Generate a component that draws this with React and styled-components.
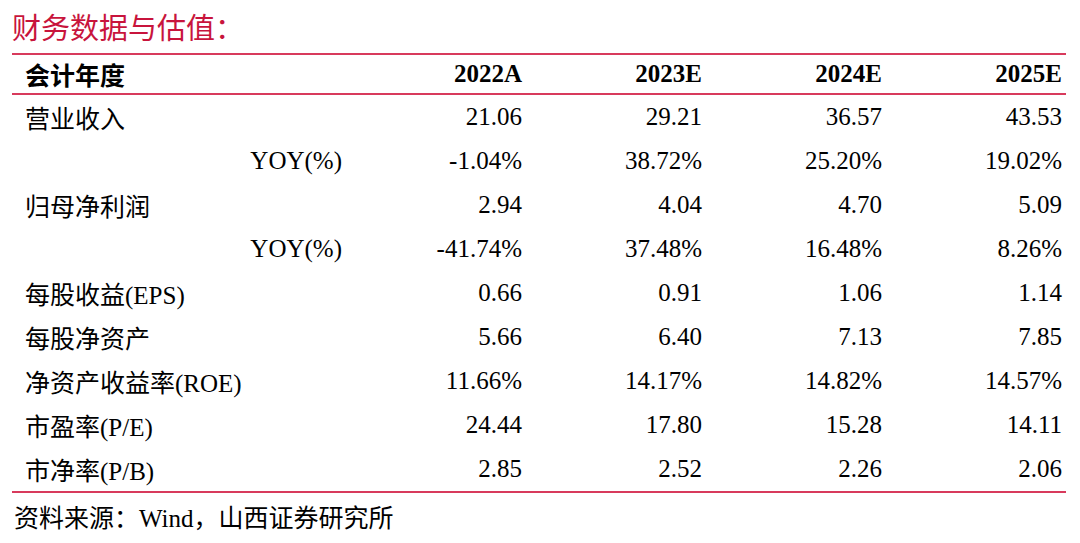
import React from "react";
import styled, { createGlobalStyle } from "styled-components";

const Global = createGlobalStyle`
  html, body { margin: 0; padding: 0; background: #fff; }
  body { font-family: "Liberation Serif", "Noto Sans CJK SC", serif; color: #000; }
`;

const Page = styled.div`
  width: 1080px;
  height: 543px;
  padding: 0 14px 0 12px;
  box-sizing: border-box;
  overflow: hidden;
`;

const Title = styled.div`
  padding-top: 8px;
  height: 44px;
  box-sizing: border-box;
  line-height: 36px;
  font-size: 29px;
  color: #c8143c;
  font-family: "Noto Sans CJK SC", sans-serif;
  white-space: nowrap;
`;

const Table = styled.div`
  margin-top: 9px;
  border-top: 2px solid #d83a5c;
  border-bottom: 2px solid #d83a5c;
`;

const Row = styled.div`
  display: grid;
  grid-template-columns: 1fr repeat(4, 180px);
  padding-right: 4px;
  height: ${(p) => (p.$head ? "38px" : "44px")};
  align-items: center;
  font-size: 25px;
  font-weight: ${(p) => (p.$head ? 700 : 400)};
  border-bottom: ${(p) => (p.$head ? "2px solid #d83a5c" : "none")};
`;

const Label = styled.div`
  padding-left: ${(p) => (p.$sub ? "0" : "13px")};
  text-align: ${(p) => (p.$sub ? "right" : "left")};
  white-space: nowrap;
`;

const Cell = styled.div`
  text-align: right;
  white-space: nowrap;
`;

const Footer = styled.div`
  padding: 6px 0 0 2px;
  line-height: 40px;
  font-size: 25px;
  white-space: nowrap;
`;

const head = ["2022A", "2023E", "2024E", "2025E"];
const rows = [
  ["营业收入", ["21.06", "29.21", "36.57", "43.53"]],
  ["YOY(%)", ["-1.04%", "38.72%", "25.20%", "19.02%"], true],
  ["归母净利润", ["2.94", "4.04", "4.70", "5.09"]],
  ["YOY(%)", ["-41.74%", "37.48%", "16.48%", "8.26%"], true],
  ["每股收益(EPS)", ["0.66", "0.91", "1.06", "1.14"]],
  ["每股净资产", ["5.66", "6.40", "7.13", "7.85"]],
  ["净资产收益率(ROE)", ["11.66%", "14.17%", "14.82%", "14.57%"]],
  ["市盈率(P/E)", ["24.44", "17.80", "15.28", "14.11"]],
  ["市净率(P/B)", ["2.85", "2.52", "2.26", "2.06"]],
];

export default function App() {
  return (
    <Page>
      <Global />
      <Title>财务数据与估值：</Title>
      <Table>
        <Row $head>
          <Label>会计年度</Label>
          {head.map((h) => (
            <Cell key={h}>{h}</Cell>
          ))}
        </Row>
        {rows.map(([label, vals, sub], i) => (
          <Row key={i}>
            <Label $sub={sub}>{label}</Label>
            {vals.map((v, j) => (
              <Cell key={j}>{v}</Cell>
            ))}
          </Row>
        ))}
      </Table>
      <Footer>资料来源：Wind，山西证券研究所</Footer>
    </Page>
  );
}
